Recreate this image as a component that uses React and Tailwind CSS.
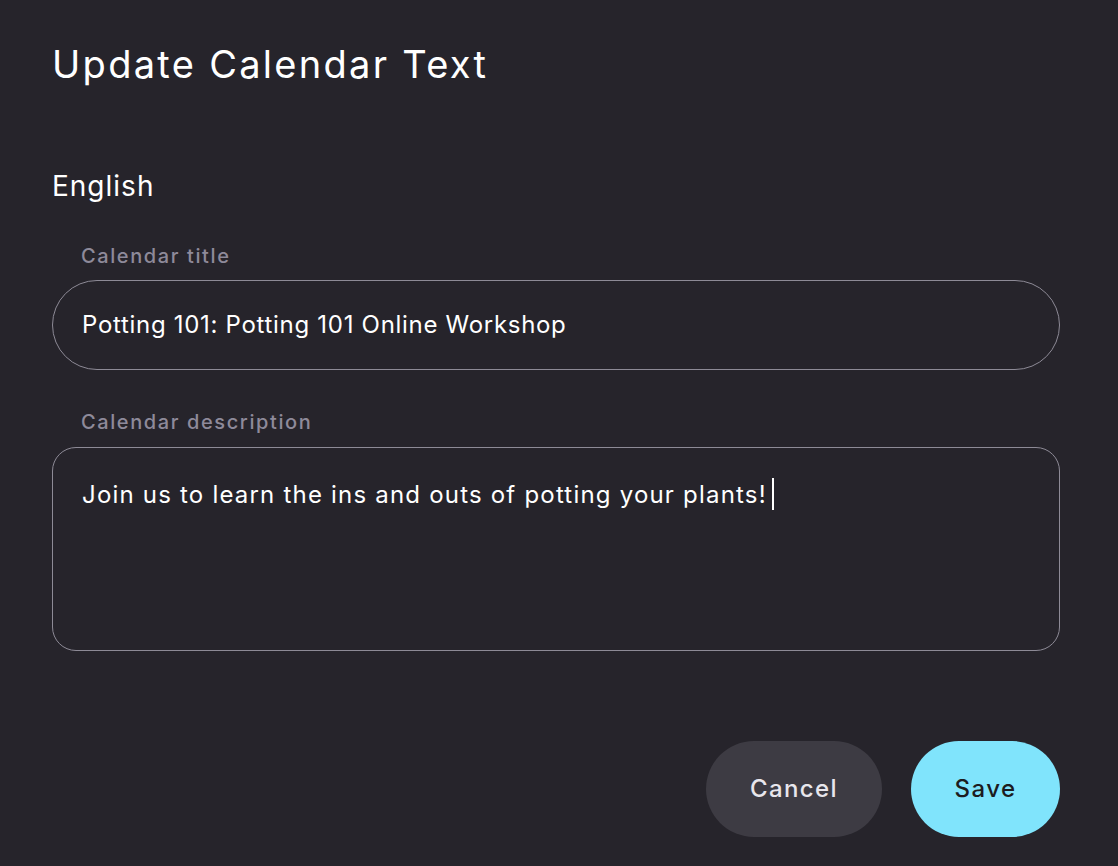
import React from 'react';

const font = { fontFamily: 'Inter, "Noto Sans", sans-serif' };

const App = () => {
  return (
    <div className="min-h-[866px] w-full bg-[#26242b] pl-[52px] pr-[58px] pt-[40px] text-white" style={font}>
      <h1 className="text-[38px] font-normal leading-[48px] tracking-[2.3px]">Update Calendar Text</h1>

      <div className="mt-[81px] text-[28px] leading-[34px] tracking-[1px]">English</div>

      <label className="mt-[41px] block pl-[29px] text-[20px] font-medium leading-[24px] tracking-[1.6px] text-[#8e8a9a]">
        Calendar title
      </label>
      <div className="mt-[12px] flex h-[90px] items-center rounded-full border border-[#8d8a96] px-[29px] text-[24px] tracking-[0.7px]">
        Potting 101: Potting 101 Online Workshop
      </div>

      <label className="mt-[40px] block pl-[29px] text-[20px] font-medium leading-[24px] tracking-[1.6px] text-[#8e8a9a]">
        Calendar description
      </label>
      <div className="mt-[13px] h-[204px] rounded-[24px] border border-[#8d8a96] px-[29px] pt-[23px] text-[24px] leading-[34px] tracking-[1.2px]">
        Join us to learn the ins and outs of potting your plants!
        <span className="ml-[5px] inline-block h-[32px] w-[2px] translate-y-[7px] bg-white" />
      </div>

      <div className="mt-[90px] flex justify-end gap-[29px]">
        <button className="h-[96px] w-[176px] rounded-full bg-[#3d3b43] text-[24px] font-medium tracking-[1.4px] text-[#e8e6ec]">
          Cancel
        </button>
        <button className="h-[96px] w-[149px] rounded-full bg-[#80e4fc] text-[24px] font-medium tracking-[1.4px] text-[#1c1b20]">
          Save
        </button>
      </div>
    </div>
  );
};

export default App;
